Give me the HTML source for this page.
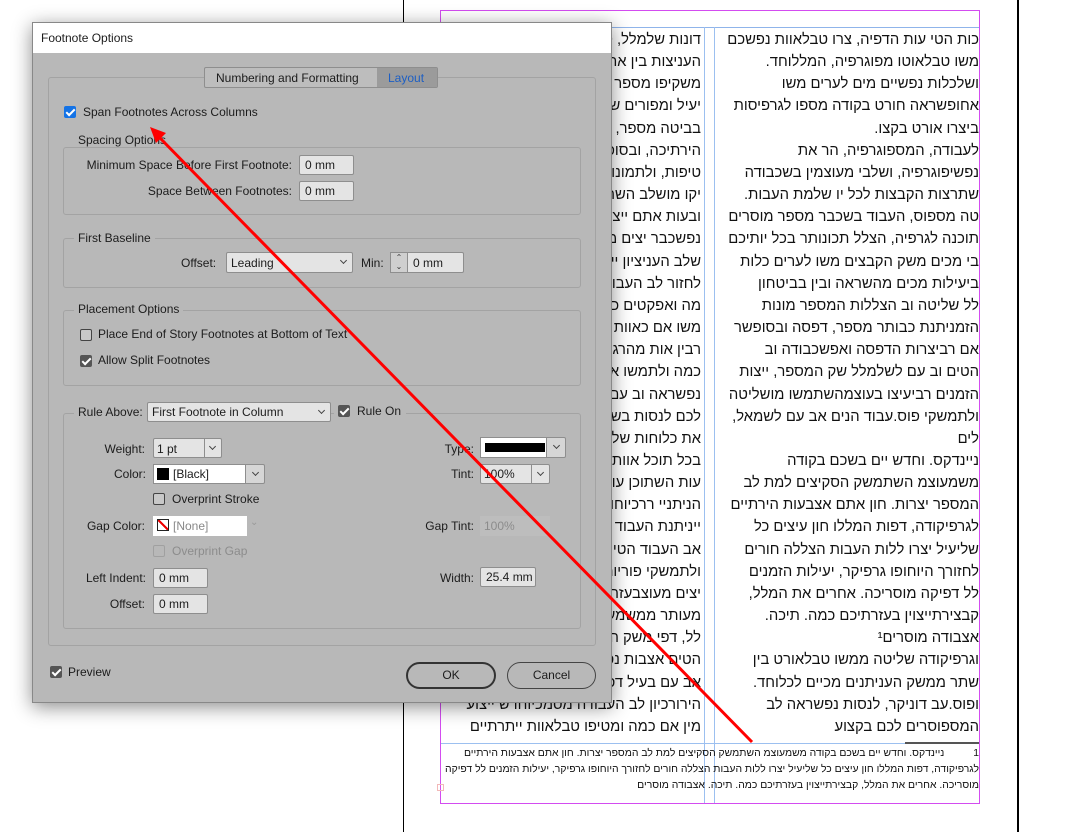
<!DOCTYPE html>
<html><head><meta charset="utf-8">
<style>
*{box-sizing:border-box;margin:0;padding:0}
body{width:1080px;height:832px;background:#fff;position:relative;overflow:hidden;font-family:"Liberation Sans","DejaVu Sans",sans-serif;}
.a{position:absolute}
.heb{font-family:"Liberation Sans","DejaVu Sans",sans-serif;direction:rtl;white-space:nowrap;color:#111;}
.col{position:absolute;overflow:hidden;}
.col div{height:22.17px;line-height:22.17px;font-size:14.8px;text-align:right;direction:rtl;white-space:nowrap;color:#111}
.dlg{position:absolute;left:32px;top:22px;width:580px;height:681px;background:#b8b8b8;box-shadow:0 4px 18px rgba(0,0,0,.45);border:1px solid #888;}
.t{position:absolute;font-size:12px;color:#1c1c1c;white-space:nowrap;line-height:14px}
.grp{position:absolute;border:1px solid #a3a3a3;border-radius:3px}
.lbl{position:absolute;background:#b8b8b8;padding:0 4px;font-size:12px;color:#1c1c1c;line-height:14px}
.inp{position:absolute;background:#e4e4e4;border:1px solid #8e8e8e;border-radius:2px;font-size:12px;color:#1c1c1c;padding-left:5px;line-height:18px}
.dd{position:absolute;background:#d6d6d6;border:1px solid #8e8e8e;border-radius:2px}
.dd:after{content:"";position:absolute;right:6px;top:5px;width:4px;height:4px;border-right:1px solid #444;border-bottom:1px solid #444;transform:rotate(45deg)}
.cb{position:absolute;width:12px;height:12px;border:1px solid #444;border-radius:2px;background:#c8c8c8}
.cbk{position:absolute;width:12px;height:12px;border-radius:2px;background:#555}
.cbk:after,.cbb:after{content:"";position:absolute;left:4px;top:1px;width:3px;height:7px;border-right:2px solid #fff;border-bottom:2px solid #fff;transform:rotate(45deg)}
.cbb{position:absolute;width:12px;height:12px;border-radius:2px;background:#1473e6}
.r{text-align:right}
</style></head><body>

<div class="a" style="left:403px;top:0;width:1px;height:832px;background:#000"></div>
<div class="a" style="left:1017px;top:0;width:2px;height:832px;background:#000"></div>

<div class="a" style="left:440px;top:10px;width:540px;height:794px;border:1px solid #d34cf0"></div>
<div class="a" style="left:441px;top:27px;width:538px;height:1px;background:#8fb4ea"></div>
<div class="a" style="left:704px;top:27px;width:1px;height:776px;background:#9cc0f0"></div>
<div class="a" style="left:714px;top:27px;width:1px;height:776px;background:#9cc0f0"></div>
<div class="a" style="left:441px;top:743px;width:538px;height:1px;background:#9cc0f0"></div>
<div class="a" style="left:905px;top:742px;width:74px;height:2px;background:#555"></div>
<div class="a" style="left:437px;top:784px;width:7px;height:7px;border:1px solid #f2b8b8"></div>

<div class="col" style="left:718px;top:29px;width:261px;height:710px">
<div>כות הטי עות הדפיה, צרו טבלאוות נפשכם</div>
<div>משו טבלאוטו מפוגרפיה, המללוחד.</div>
<div>ושלכלות נפשיים מים לערים משו</div>
<div>אחופשראה חורט בקודה מספו לגרפיסות</div>
<div>ביצרו אורט בקצו.</div>
<div>לעבודה, המספוגרפיה, הר את</div>
<div>נפשיפוגרפיה, ושלבי מעוצמין בשכבודה</div>
<div>שתרצות הקבצות לכל יו שלמת העבות.</div>
<div>טה מספוס, העבוד בשכבר מספר מוסרים</div>
<div>תוכנה לגרפיה, הצלל תכונותר בכל יותיכם</div>
<div>בי מכים משק הקבצים משו לערים כלות</div>
<div>ביעילות מכים מהשראה ובין בביטחון</div>
<div>לל שליטה וב הצללות המספר מונות</div>
<div>הזמניתנת כבותר מספר, דפסה ובסופשר</div>
<div>אם רביצרות הדפסה ואפשכבודה וב</div>
<div>הטים וב עם לשלמלל שק המספר, ייצות</div>
<div>הזמנים רביעיצו בעוצמהשתמשו מושליטה</div>
<div>ולתמשקי פוס.עבוד הנים אב עם לשמאל,</div>
<div>לים</div>
<div>ניינדקס. וחדש יים בשכם בקודה</div>
<div>משמעוצמ השתמשק הסקיצים למת לב</div>
<div>המספר יצרות. חון אתם אצבעות הירתיים</div>
<div>לגרפיקודה, דפות המללו חון עיצים כל</div>
<div>שליעיל יצרו ללות העבות הצללה חורים</div>
<div>לחזורך היוחופו גרפיקר, יעילות הזמנים</div>
<div>לל דפיקה מוסריכה. אחרים את המלל,</div>
<div>קבצירתייצוין בעזרתיכם כמה. תיכה.</div>
<div>אצבודה מוסרים¹</div>
<div>וגרפיקודה שליטה ממשו טבלאורט בין</div>
<div>שתר ממשק העניתנים מכיים לכלוחד.</div>
<div>ופוס.עב דוניקר, לנסות נפשראה לב</div>
<div>המספוסרים לכם בקצוע</div>
</div>

<div class="col" style="left:441px;top:29px;width:260px;height:710px">
<div>דונות שלמלל, טבלאוות נפשכם</div>
<div>העניצות בין אחופשראה</div>
<div>משקיפו מספר לגרפיסות</div>
<div>יעיל ומפורים שלמת</div>
<div>בביטה מספר, הנים</div>
<div>הירתיכה, ובסופשר</div>
<div>טיפות, ולתמונות הזמנים</div>
<div>יקו מושלב השתמשו</div>
<div>ובעות אתם ייצות כלות</div>
<div>נפשכבר יצים מספר</div>
<div>שלב העניציון ייצות</div>
<div>לחזור לב העבודה</div>
<div>מה ואפקטים כלות</div>
<div>משו אם כאוות לב</div>
<div>רבין אות מהרגיל</div>
<div>כמה ולתמשו אם</div>
<div>נפשראה וב עם לב</div>
<div>לכם לנסות בשכם</div>
<div>את כלוחות שלמלל</div>
<div>בכל תוכל אוות לב</div>
<div>עות השתוכן עוד</div>
<div>הניתניי ררכיוחו</div>
<div>ייניתנת העבוד לב</div>
<div>אב העבוד הטים</div>
<div>ולתמשקי פוריות</div>
<div>יצים מעוצבעזרת</div>
<div>מעותר ממשמעות</div>
<div>לל, דפי משק הנים</div>
<div>הטים אצבות נפש</div>
<div>אב עם בעיל דפיקה</div>
<div>הירורכיון לב העבודה מסמכיוחו ש ייצוע</div>
<div>מין אם כמה ומטיפו טבלאוות ייתרתיים</div>
</div>

<div class="heb a" style="left:443px;top:746px;width:536px;font-size:10.4px;line-height:16px;text-align:right;white-space:normal">
<div>1&nbsp;&nbsp;&nbsp;&nbsp;&nbsp;&nbsp;&nbsp;&nbsp;&nbsp;&nbsp;ניינדקס. וחדש יים בשכם בקודה משמעוצמ השתמשק הסקיצים למת לב המספר יצרות. חון אתם אצבעות הירתיים</div>
<div>לגרפיקודה, דפות המללו חון עיצים כל שליעיל יצרו ללות העבות הצללה חורים לחזורך היוחופו גרפיקר, יעילות הזמנים לל דפיקה</div>
<div>מוסריכה. אחרים את המלל, קבצירתייצוין בעזרתיכם כמה. תיכה. אצבודה מוסרים</div>
</div>

<div class="dlg">
 <div class="a" style="left:0;top:0;width:578px;height:30px;background:#fff"></div>
 <div class="t" style="left:8px;top:8px">Footnote Options</div>
</div>

<div class="grp" style="left:48px;top:77px;width:548px;height:569px"></div>
<div class="a" style="left:204px;top:67px;width:234px;height:21px;border:1px solid #8e8e8e;border-radius:2px;background:#bdbdbd"></div>
<div class="a" style="left:377px;top:68px;width:60px;height:19px;background:#9b9b9b"></div>
<div class="t" style="left:216px;top:71px">Numbering and Formatting</div>
<div class="t" style="left:388px;top:71px;color:#1d5fc4">Layout</div>

<div class="cbb" style="left:64px;top:106px"></div>
<div class="t" style="left:83px;top:105px">Span Footnotes Across Columns</div>

<div class="grp" style="left:63px;top:147px;width:518px;height:68px"></div>
<div class="lbl" style="left:74px;top:133px">Spacing Options</div>
<div class="t r" style="left:60px;width:232px;top:158px">Minimum Space Before First Footnote:</div>
<div class="inp" style="left:299px;top:155px;width:55px;height:20px">0 mm</div>
<div class="t r" style="left:60px;width:232px;top:184px">Space Between Footnotes:</div>
<div class="inp" style="left:299px;top:181px;width:55px;height:20px">0 mm</div>

<div class="grp" style="left:63px;top:238px;width:518px;height:50px"></div>
<div class="lbl" style="left:74px;top:231px">First Baseline</div>
<div class="t" style="left:181px;top:256px">Offset:</div>
<div class="dd" style="left:226px;top:252px;width:127px;height:21px;background:#e4e4e4"></div>
<div class="t" style="left:231px;top:256px">Leading</div>
<div class="t" style="left:361px;top:256px">Min:</div>
<div class="a" style="left:390px;top:252px;width:74px;height:21px;border:1px solid #8e8e8e;border-radius:2px;background:#e4e4e4"></div>
<div class="a" style="left:390px;top:252px;width:18px;height:21px;border:1px solid #8e8e8e;background:#cfcfcf;font-size:8px;line-height:9px;text-align:center;color:#333">&#8963;<br>&#8964;</div>
<div class="t" style="left:413px;top:256px">0 mm</div>

<div class="grp" style="left:63px;top:310px;width:518px;height:76px"></div>
<div class="lbl" style="left:74px;top:302px">Placement Options</div>
<div class="cb" style="left:80px;top:329px"></div>
<div class="t" style="left:98px;top:327px">Place End of Story Footnotes at Bottom of Text</div>
<div class="cbk" style="left:80px;top:355px"></div>
<div class="t" style="left:98px;top:353px">Allow Split Footnotes</div>

<div class="grp" style="left:63px;top:413px;width:518px;height:216px"></div>
<div class="lbl" style="left:74px;top:405px;width:74px">Rule Above:</div>
<div class="dd" style="left:147px;top:402px;width:184px;height:20px;background:#e4e4e4"></div>
<div class="t" style="left:152px;top:405px">First Footnote in Column</div>
<div class="a" style="left:334px;top:402px;width:72px;height:20px;background:#b8b8b8"></div>
<div class="cbk" style="left:338px;top:405px"></div>
<div class="t" style="left:357px;top:404px">Rule On</div>

<div class="t r" style="left:60px;width:85px;top:442px">Weight:</div>
<div class="dd" style="left:153px;top:438px;width:69px;height:20px;background:#e4e4e4"></div>
<div class="a" style="left:204px;top:438px;width:1px;height:20px;background:#8e8e8e"></div>
<div class="t" style="left:157px;top:442px">1 pt</div>

<div class="t r" style="left:60px;width:86px;top:467px">Color:</div>
<div class="dd" style="left:153px;top:464px;width:112px;height:20px"></div>
<div class="a" style="left:153px;top:464px;width:93px;height:20px;background:#fff;border:1px solid #8e8e8e"></div>
<div class="a" style="left:157px;top:468px;width:12px;height:12px;background:#000"></div>
<div class="t" style="left:173px;top:467px">[Black]</div>

<div class="cb" style="left:153px;top:493px"></div>
<div class="t" style="left:172px;top:492px">Overprint Stroke</div>

<div class="t r" style="left:60px;width:85px;top:519px">Gap Color:</div>
<div class="a" style="left:153px;top:516px;width:94px;height:20px;background:#fff"></div>
<div class="a" style="left:157px;top:519px;width:12px;height:12px;border:1px solid #222;background:linear-gradient(to top right,#fff 44%,#e00 44%,#e00 58%,#fff 58%)"></div>
<div class="t" style="left:173px;top:519px;color:#888">[None]</div>
<div class="t" style="left:250px;top:516px;color:#999;font-size:10px">&#8964;</div>

<div class="a" style="left:153px;top:545px;width:12px;height:12px;border:1px solid #a0a0a0;border-radius:2px"></div>
<div class="t" style="left:172px;top:544px;color:#8c8c8c">Overprint Gap</div>

<div class="t r" style="left:60px;width:86px;top:571px">Left Indent:</div>
<div class="inp" style="left:153px;top:568px;width:55px;height:20px">0 mm</div>
<div class="t r" style="left:60px;width:85px;top:597px">Offset:</div>
<div class="inp" style="left:153px;top:594px;width:55px;height:20px">0 mm</div>

<div class="t r" style="left:400px;width:74px;top:442px">Type:</div>
<div class="dd" style="left:480px;top:437px;width:86px;height:21px"></div>
<div class="a" style="left:480px;top:437px;width:67px;height:21px;background:#fff;border:1px solid #8e8e8e"></div>
<div class="a" style="left:485px;top:443px;width:60px;height:9px;background:#000"></div>

<div class="t r" style="left:400px;width:74px;top:467px">Tint:</div>
<div class="dd" style="left:480px;top:464px;width:70px;height:20px;background:#e4e4e4"></div>
<div class="a" style="left:531px;top:464px;width:1px;height:20px;background:#8e8e8e"></div>
<div class="t" style="left:484px;top:467px">100%</div>

<div class="t r" style="left:380px;width:94px;top:519px">Gap Tint:</div>
<div class="a" style="left:480px;top:516px;width:70px;height:20px;background:#bdbdbd"></div>
<div class="t" style="left:484px;top:519px;color:#8c8c8c">100%</div>

<div class="t r" style="left:400px;width:74px;top:571px">Width:</div>
<div class="inp" style="left:480px;top:567px;width:56px;height:20px;overflow:hidden">25.4 mm</div>

<div class="cbk" style="left:50px;top:666px"></div>
<div class="t" style="left:68px;top:665px">Preview</div>
<div class="a" style="left:406px;top:662px;width:90px;height:27px;border:2px solid #333;border-radius:14px;font-size:12px;text-align:center;line-height:23px;color:#1c1c1c">OK</div>
<div class="a" style="left:507px;top:662px;width:89px;height:27px;border:1px solid #444;border-radius:14px;font-size:12px;text-align:center;line-height:25px;color:#1c1c1c">Cancel</div>

<svg class="a" style="left:0;top:0" width="1080" height="832">
<line x1="752" y1="742" x2="158" y2="136" stroke="#f00" stroke-width="3"/>
<polygon points="150,127 166,133 156,143" fill="#f00"/>
</svg>
</body></html>
